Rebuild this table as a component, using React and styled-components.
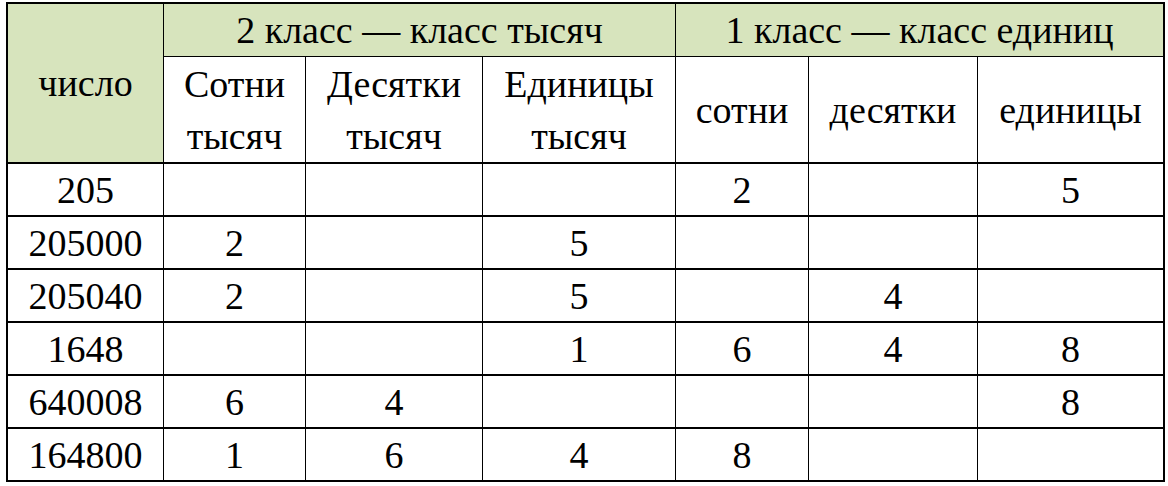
import styled, { createGlobalStyle } from "styled-components";

const GlobalStyle = createGlobalStyle`
  body {
    margin: 0;
    background: #fff;
  }
`;

const GREEN = "#d7e4bd";

const rows = [
  ["205", "", "", "", "2", "", "5"],
  ["205000", "2", "", "5", "", "", ""],
  ["205040", "2", "", "5", "", "4", ""],
  ["1648", "", "", "1", "6", "4", "8"],
  ["640008", "6", "4", "", "", "", "8"],
  ["164800", "1", "6", "4", "8", "", ""],
];

const App = () => {
  return (
    <Page>
      <GlobalStyle />
      <Grid>
        <HeadCell $rows={2} $green>
          число
        </HeadCell>
        <HeadCell $cols={3} $green>
          2 класс — класс тысяч
        </HeadCell>
        <HeadCell $cols={3} $green>
          1 класс — класс единиц
        </HeadCell>

        <HeadCell>
          Сотни
          <br />
          тысяч
        </HeadCell>
        <HeadCell>
          Десятки
          <br />
          тысяч
        </HeadCell>
        <HeadCell>
          Единицы
          <br />
          тысяч
        </HeadCell>
        <HeadCell>сотни</HeadCell>
        <HeadCell>десятки</HeadCell>
        <HeadCell>единицы</HeadCell>

        {rows.map((r, i) =>
          r.map((v, j) => <Cell key={`${i}-${j}`}>{v}</Cell>)
        )}
      </Grid>
    </Page>
  );
};

const Page = styled.div`
  padding: 2px 0 0 6px;
  font-family: "Liberation Serif", "Times New Roman", serif;
`;

const Grid = styled.div`
  display: grid;
  grid-template-columns: 155px 141px 176px 192px 132px 168px 185px;
  grid-template-rows: 52px 105px repeat(6, 52px);
  column-gap: 1px;
  row-gap: 1px;
  width: max-content;
  background: #000;
  border: 2px solid #000;
  font-family: "Liberation Serif", "Times New Roman", serif;
  font-size: 38px;
  color: #000;
`;

const HeadCell = styled.div`
  grid-column: span ${(p) => p.$cols || 1};
  grid-row: span ${(p) => p.$rows || 1};
  display: flex;
  align-items: center;
  justify-content: center;
  text-align: center;
  line-height: 52px;
  background: ${(p) => (p.$green ? GREEN : "#fff")};
  white-space: nowrap;
`;

const Cell = styled.div`
  display: flex;
  align-items: center;
  justify-content: center;
  box-sizing: border-box;
  border-top: 1px solid #000;
  background: #fff;
  padding-top: 1px;
`;

export default App;
